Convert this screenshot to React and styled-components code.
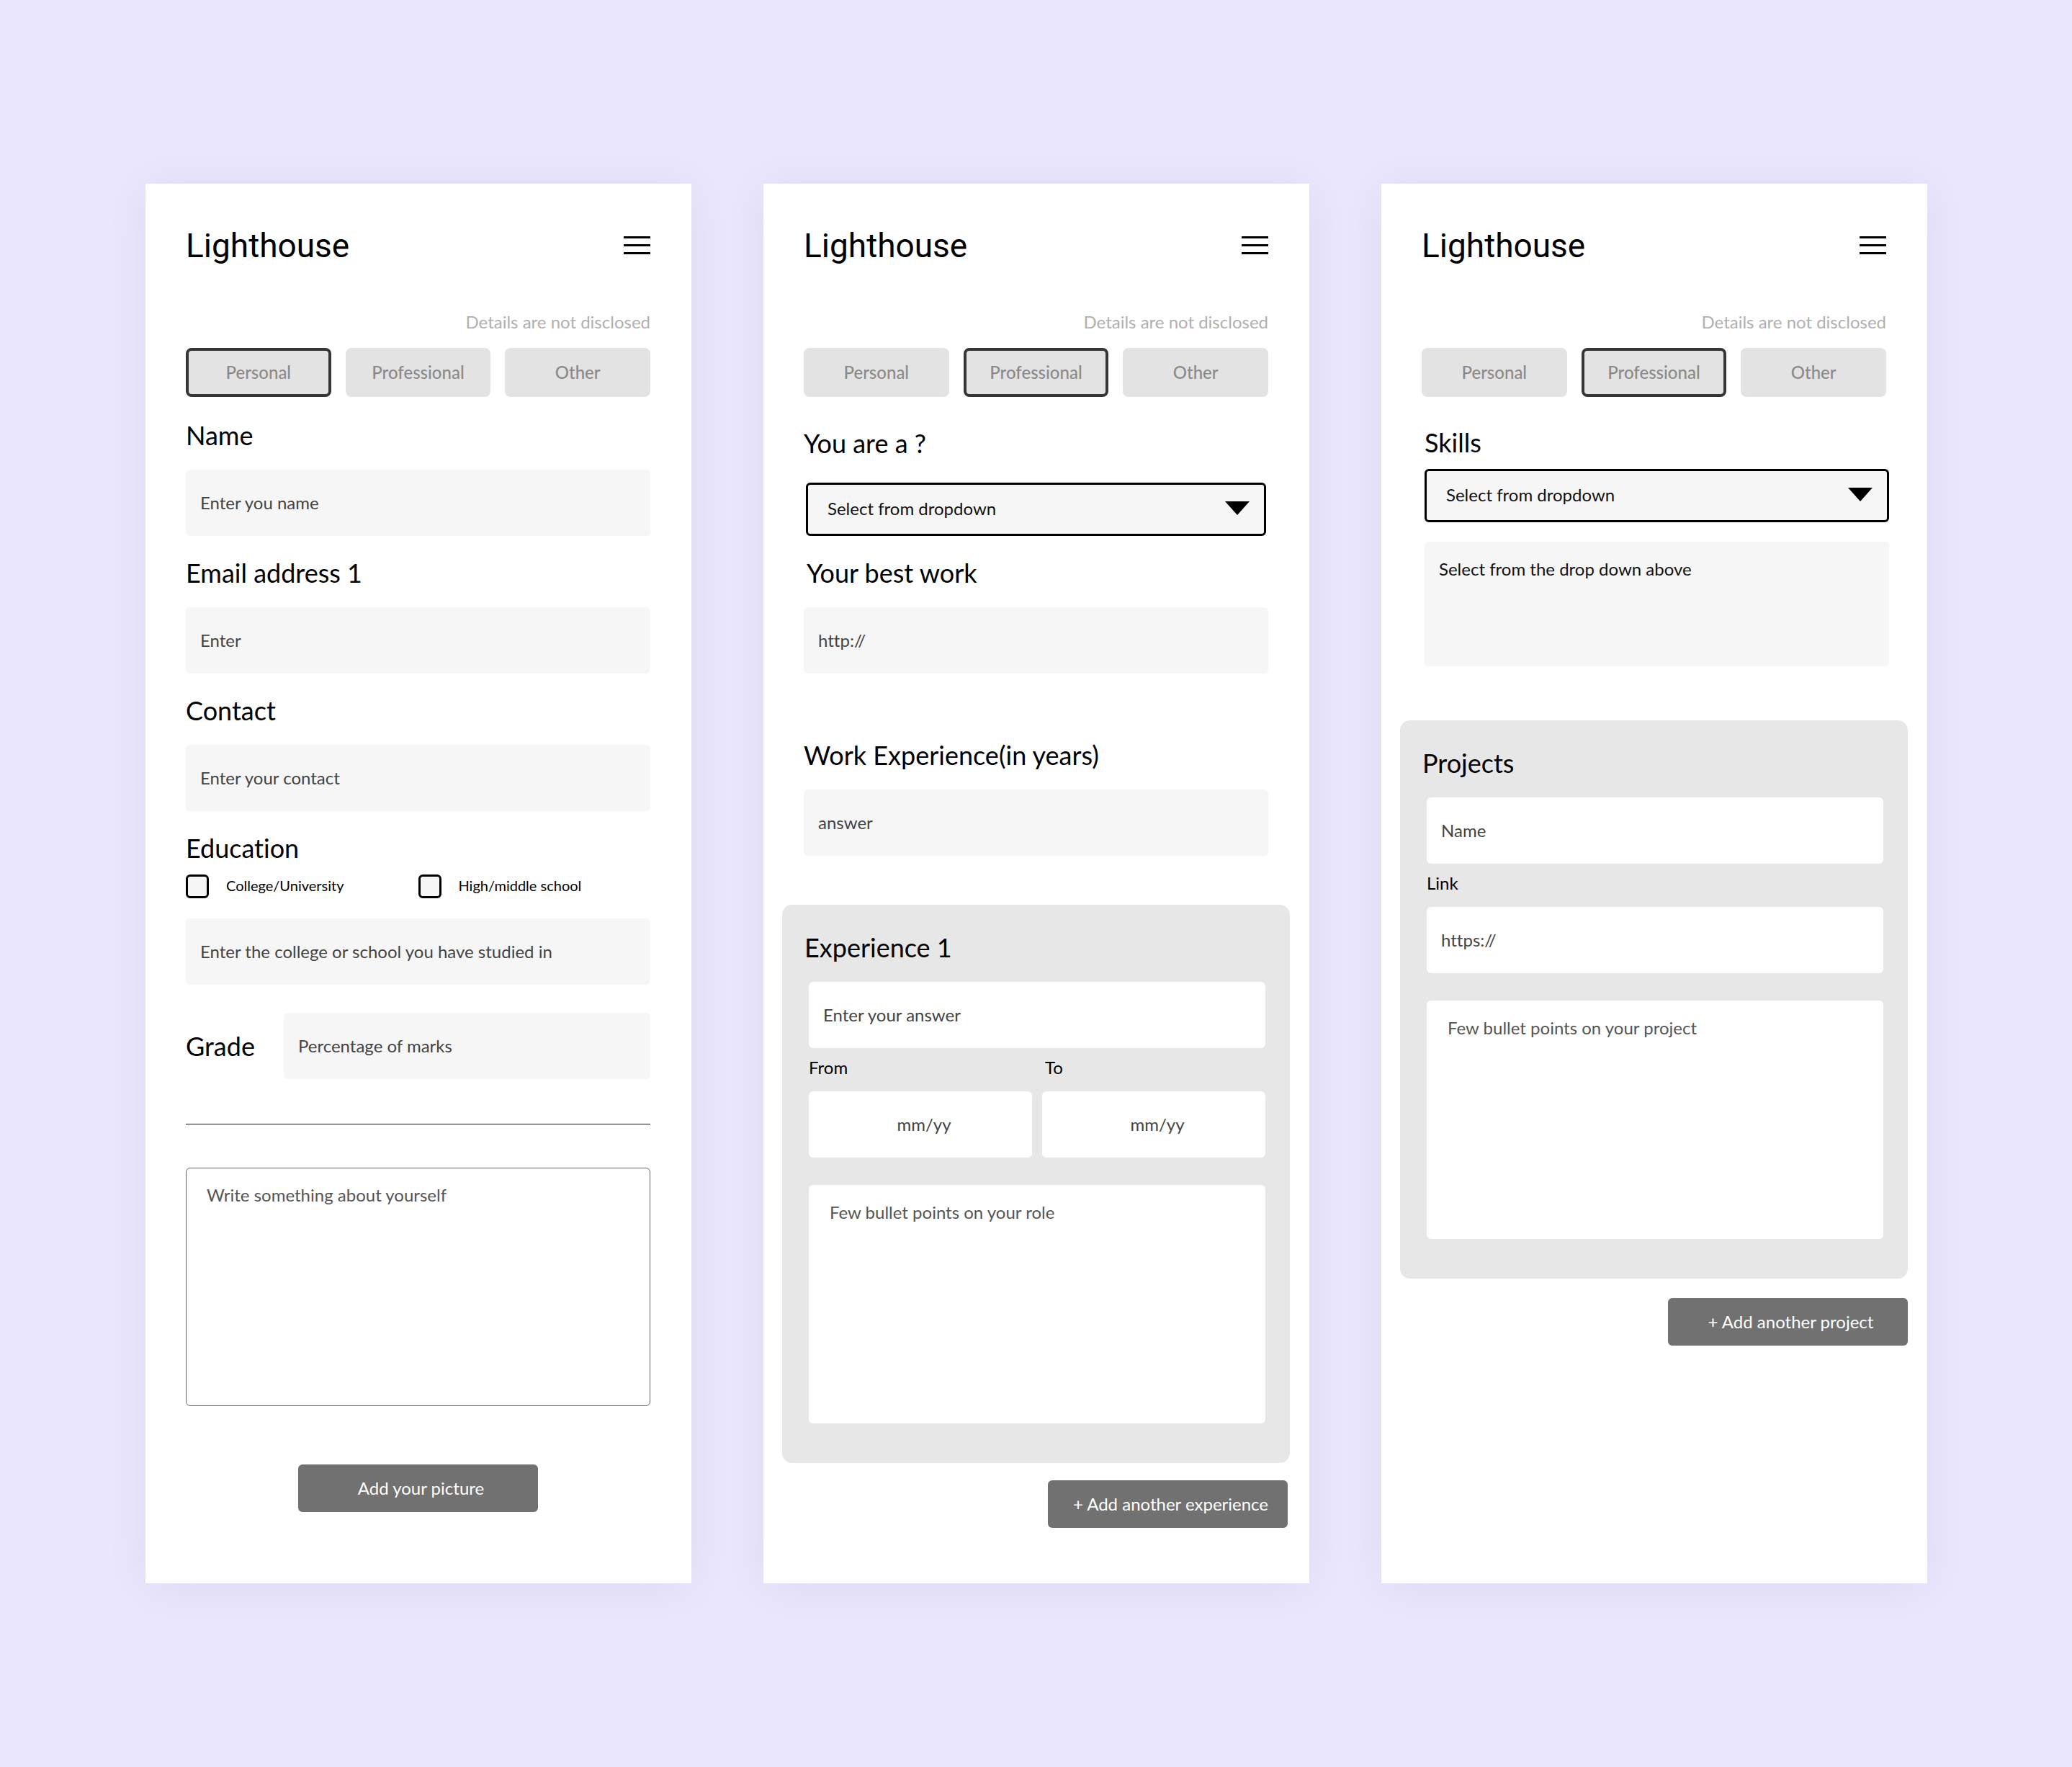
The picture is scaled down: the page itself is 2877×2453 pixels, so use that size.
import React, { useId } from "react";
import styled, { createGlobalStyle, css } from "styled-components";

const GlobalStyle = createGlobalStyle`
  *, *::before, *::after { box-sizing: border-box; }
  body {
    margin: 0;
    background: #eae6fe;
    color: #000;
    font-family: Lato, "Liberation Sans", sans-serif;
    font-size: 24px;
    font-variant-ligatures: none;
    line-height: 30px;
  }
  button, input, textarea, select { font: inherit; margin: 0; }
`;

const Board = styled.main`
  display: grid;
  grid-template-columns: repeat(3, minmax(0, 1fr));
  gap: 100px;
  padding: 255px 201px 255px 202px;

  @media (max-width: 2100px) {
    gap: 40px;
    padding: 60px 40px;
  }
  @media (max-width: 1700px) {
    grid-template-columns: minmax(0, 760px);
    justify-content: center;
  }
`;

const Card = styled.section`
  display: flex;
  flex-direction: column;
  padding: 57px 57px 77px 56px;
  background: #fff;
  box-shadow: 0 4px 60px rgba(0, 0, 0, 0.06);
`;

const Header = styled.header`
  display: flex;
  align-items: center;
  justify-content: space-between;
  min-height: 58px;
`;

const Logo = styled.h1`
  margin: 0;
  font: 400 46px/56px Roboto, "Liberation Sans", sans-serif;
`;

const MenuButton = styled.button`
  display: flex;
  padding: 0;
  border: 0;
  background: none;
  cursor: pointer;
`;

const Notice = styled.p`
  margin: 62px 0 21px;
  color: #b0b0b0;
  text-align: right;
`;

const Tabs = styled.nav`
  display: grid;
  grid-template-columns: repeat(3, 1fr);
  gap: 20px;
`;

const Tab = styled.button`
  height: 68px;
  padding: 0;
  border: 4px solid ${(p) => (p.$active ? "#363636" : "#e3e3e3")};
  border-radius: 8px;
  background: #e3e3e3;
  color: #8a8a8a;
  font-weight: 500;
  cursor: pointer;
`;

const Form = styled.form`
  display: flex;
  flex-direction: column;
  padding-top: ${(p) => p.$top}px;
  padding-bottom: ${(p) => p.$bottom || 0}px;
`;

const Field = styled.div`
  display: flex;
  flex-direction: column;
  gap: ${(p) => p.$gap ?? 26}px;
  margin-bottom: ${(p) => p.$after ?? 29}px;
`;

const headingText = css`
  font-size: 36px;
  line-height: 44px;
`;

const Label = styled.label`
  ${headingText}
  padding-left: ${(p) => (p.$indent ? 4 : 0)}px;
`;

const SmallLabel = styled.label`
  padding-left: ${(p) => (p.$indent ? 4 : 0)}px;
`;

const control = css`
  display: block;
  width: 100%;
  border: 0;
  border-radius: 6px;
  background: ${(p) => (p.$white ? "#fff" : "#f6f6f6")};
  color: #444;
  &::placeholder { color: #444; opacity: 1; }
`;

const TextInput = styled.input`
  ${control}
  height: 92px;
  padding: 0 20px 2px;
`;

const DateInput = styled(TextInput)`
  padding: 0 0 2px 10px;
  text-align: center;
`;

const TextArea = styled.textarea`
  ${control}
  height: 331px;
  padding: 23px 29px;
  resize: none;
  &::placeholder { color: #555; }
`;

const OutlinedArea = styled(TextArea)`
  padding: 22px 28px;
  border: 1px solid #666;
  background: #fff;
`;

const SkillsArea = styled(TextArea)`
  height: 173px;
  padding: 23px 20px;
  &::placeholder { color: #111; }
`;

const SelectWrap = styled.div`
  position: relative;
  margin: 0 ${(p) => (p.$inset ? 3 : 0)}px;
`;

const Select = styled.select`
  display: block;
  width: 100%;
  height: 74px;
  padding: 0 70px 2px 27px;
  border: 3px solid #000;
  border-radius: 6px;
  background: #f6f6f6;
  color: #111;
  appearance: none;
`;

const Arrow = styled.svg`
  position: absolute;
  top: 26px;
  right: 23px;
  pointer-events: none;
`;

const EducationGroup = styled.fieldset`
  min-width: 0;
  margin: 0;
  padding: 0;
  border: 0;
`;

const Legend = styled.legend`
  ${headingText}
  margin-bottom: 15px;
  padding: 0;
`;

const CheckRow = styled.div`
  display: grid;
  grid-template-columns: 1fr 1fr;
  margin-bottom: 28px;
`;

const CheckLabel = styled.label`
  display: flex;
  align-items: flex-start;
  gap: 24px;
  font-size: 20px;
`;

const Checkbox = styled.input`
  appearance: none;
  flex: none;
  width: 32px;
  height: 33px;
  margin: 0;
  border: 3px solid #000;
  border-radius: 6px;
  background: #f6f6f6;
  &:checked { background: #000; }
`;

const GradeRow = styled.div`
  display: grid;
  grid-template-columns: 112px 1fr;
  align-items: center;
  gap: 24px;
  margin-top: 39px;
`;

const Divider = styled.hr`
  width: 100%;
  height: 1px;
  margin: 62px 0 60px;
  border: 0;
  background: #111;
`;

const Panel = styled.section`
  margin: 0 -30px;
  padding: 37px 34px 55px 37px;
  border-radius: 14px;
  background: #e7e7e7;
`;

const PanelTitle = styled.h2`
  ${headingText}
  margin: 0 0 26px -6px;
  font-weight: 400;
`;

const PanelField = styled.div`
  display: flex;
  flex-direction: column;
  gap: 18px;
  margin: 12px 0 38px;
`;

const Dates = styled.div`
  display: grid;
  grid-template-columns: 1fr 1fr;
  column-gap: 14px;
`;

const ActionButton = styled.button`
  width: 333px;
  height: 66px;
  padding: 0 0 0 8px;
  border: 0;
  border-radius: 6px;
  background: #717171;
  color: #fff;
  cursor: pointer;
`;

const Actions = styled.div`
  display: flex;
  justify-content: ${(p) => (p.$center ? "center" : "flex-end")};
  margin: ${(p) => p.$top}px ${(p) => p.$right ?? 0}px 0 0;
`;

const ShiftedFields = styled.div`
  margin: 0 -4px 0 4px;
`;

const TABS = ["Personal", "Professional", "Other"];

function MenuIcon() {
  return (
    <svg width="37" height="26" viewBox="0 0 37 26" aria-hidden="true">
      <path d="M0 1.5h37M0 12.5h37M0 23.5h37" stroke="#000" strokeWidth="3" />
    </svg>
  );
}

function Screen({ active, children }) {
  return (
    <Card>
      <Header>
        <Logo>Lighthouse</Logo>
        <MenuButton type="button" aria-label="Menu"><MenuIcon /></MenuButton>
      </Header>
      <Notice>Details are not disclosed</Notice>
      <Tabs>
        {TABS.map((name) => (
          <Tab key={name} type="button" $active={name === active} aria-pressed={name === active}>
            {name}
          </Tab>
        ))}
      </Tabs>
      {children}
    </Card>
  );
}

function InputField({ label, placeholder, after, indent }) {
  const id = useId();
  return (
    <Field $after={after}>
      <Label htmlFor={id} $indent={indent}>{label}</Label>
      <TextInput id={id} placeholder={placeholder} />
    </Field>
  );
}

function SelectField({ label, gap, after, inset }) {
  const id = useId();
  return (
    <Field $gap={gap} $after={after}>
      <Label htmlFor={id}>{label}</Label>
      <SelectWrap $inset={inset}>
        <Select id={id}>
          <option>Select from dropdown</option>
        </Select>
        <Arrow width="34" height="19" viewBox="0 0 34 19" aria-hidden="true">
          <path d="M0 0h34L17 19z" />
        </Arrow>
      </SelectWrap>
    </Field>
  );
}

function PersonalScreen() {
  const gradeId = useId();
  return (
    <Screen active="Personal">
      <Form $top={31} $bottom={22}>
        <InputField label="Name" placeholder="Enter you name" />
        <InputField label="Email address 1" placeholder="Enter" />
        <InputField label="Contact" placeholder="Enter your contact" />
        <EducationGroup>
          <Legend>Education</Legend>
          <CheckRow>
            <CheckLabel><Checkbox type="checkbox" />College/University</CheckLabel>
            <CheckLabel><Checkbox type="checkbox" />High/middle school</CheckLabel>
          </CheckRow>
          <TextInput
            aria-label="College or school"
            placeholder="Enter the college or school you have studied in"
          />
        </EducationGroup>
        <GradeRow>
          <Label htmlFor={gradeId}>Grade</Label>
          <TextInput id={gradeId} placeholder="Percentage of marks" />
        </GradeRow>
        <Divider />
        <OutlinedArea aria-label="About yourself" placeholder="Write something about yourself" />
        <Actions $center $top={81}>
          <ActionButton type="button">Add your picture</ActionButton>
        </Actions>
      </Form>
    </Screen>
  );
}

function ProfessionalScreen() {
  const fromId = useId();
  const toId = useId();
  return (
    <Screen active="Professional">
      <Form $top={42}>
        <SelectField label="You are a ?" gap={33} inset />
        <InputField label="Your best work" placeholder="http://" after={91} indent />
        <InputField label="Work Experience(in years)" placeholder="answer" after={68} />
        <Panel>
          <PanelTitle>Experience 1</PanelTitle>
          <TextInput $white aria-label="Experience 1" placeholder="Enter your answer" />
          <Dates>
            <PanelField>
              <SmallLabel htmlFor={fromId}>From</SmallLabel>
              <DateInput $white id={fromId} placeholder="mm/yy" />
            </PanelField>
            <PanelField>
              <SmallLabel htmlFor={toId} $indent>To</SmallLabel>
              <DateInput $white id={toId} placeholder="mm/yy" />
            </PanelField>
          </Dates>
          <TextArea $white aria-label="Your role" placeholder="Few bullet points on your role" />
        </Panel>
        <Actions $top={24} $right={-27}>
          <ActionButton type="button">+ Add another experience</ActionButton>
        </Actions>
      </Form>
    </Screen>
  );
}

function SkillsScreen() {
  const linkId = useId();
  return (
    <Screen active="Professional">
      <Form $top={41}>
        <ShiftedFields>
          <SelectField label="Skills" gap={15} after={27} />
          <Field $after={75}>
            <SkillsArea readOnly aria-label="Selected skills" placeholder="Select from the drop down above" />
          </Field>
        </ShiftedFields>
        <Panel>
          <PanelTitle>Projects</PanelTitle>
          <TextInput $white aria-label="Project name" placeholder="Name" />
          <PanelField>
            <SmallLabel htmlFor={linkId}>Link</SmallLabel>
            <TextInput $white id={linkId} placeholder="https://" />
          </PanelField>
          <TextArea $white aria-label="Your project" placeholder="Few bullet points on your project" />
        </Panel>
        <Actions $top={27} $right={-30}>
          <ActionButton type="button">+ Add another project</ActionButton>
        </Actions>
      </Form>
    </Screen>
  );
}

export default function App() {
  return (
    <>
      <GlobalStyle />
      <Board>
        <PersonalScreen />
        <ProfessionalScreen />
        <SkillsScreen />
      </Board>
    </>
  );
}
